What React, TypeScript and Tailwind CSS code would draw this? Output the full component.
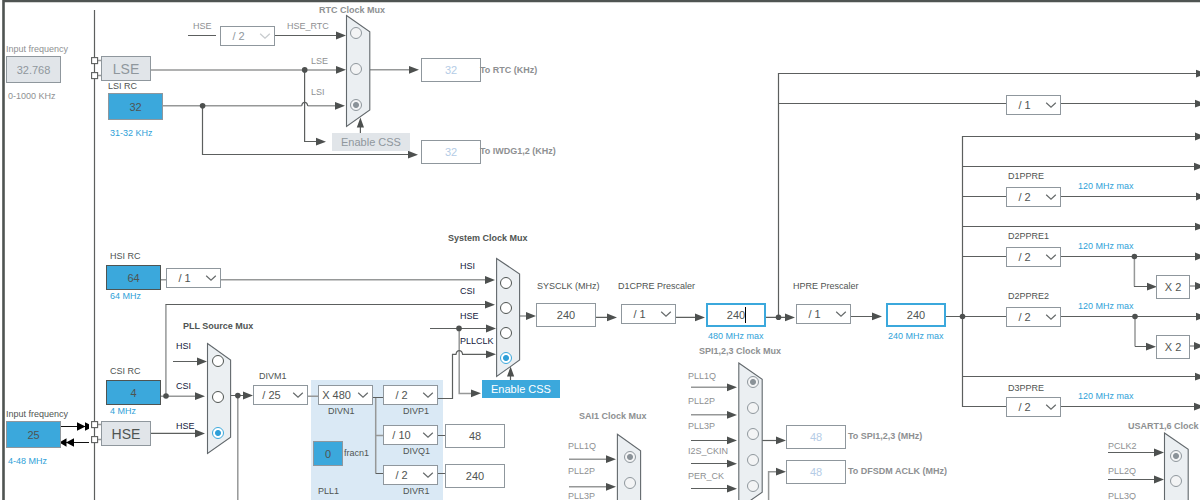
import { useState } from "react";
import clsx from "clsx";

const LINE = "#5c5f5e";
const SOFT_LINE = "#969898";
const ARROW = "#4d504f";

type LabelProps = { at: string; text: string; tone?: string; bold?: boolean; target?: string };

function Label({ at, text, tone = "text-[#4f5452]", bold, target }: LabelProps) {
  const cls = clsx("absolute text-[9px] leading-3 whitespace-nowrap", bold && "font-bold", tone, at);
  return target ? (
    <label htmlFor={target} className={cls}>{text}</label>
  ) : (
    <span className={cls}>{text}</span>
  );
}

const GREY = "text-[#8e9092]";
const BLUE = "text-[#2f9fd8]";
const NAVY = "text-[#13203c]";

const labels: LabelProps[] = [
  { at: "left-[6px] top-[43px]", text: "Input frequency", tone: GREY, target: "lse-freq" },
  { at: "left-[8px] top-[90px]", text: "0-1000 KHz", tone: GREY },
  { at: "left-[108px] top-[80px]", text: "LSI RC", target: "lsi-rc" },
  { at: "left-[110px] top-[127px]", text: "31-32 KHz", tone: BLUE },
  { at: "left-[193px] top-[20px]", text: "HSE", tone: GREY, target: "rtc-div" },
  { at: "left-[287px] top-[20px]", text: "HSE_RTC", tone: GREY, target: "rtc-0" },
  { at: "left-[311px] top-[55px]", text: "LSE", tone: GREY, target: "rtc-1" },
  { at: "left-[311px] top-[86px]", text: "LSI", tone: GREY, target: "rtc-2" },
  { at: "left-[319px] top-[4px]", text: "RTC Clock Mux", tone: GREY, bold: true },
  { at: "left-[480px] top-[64px]", text: "To RTC (KHz)", tone: GREY, bold: true, target: "to-rtc" },
  { at: "left-[480px] top-[145px]", text: "To IWDG1,2 (KHz)", tone: GREY, bold: true, target: "to-iwdg" },
  { at: "left-[110px] top-[250px]", text: "HSI RC", target: "hsi-rc" },
  { at: "left-[110px] top-[290px]", text: "64 MHz", tone: BLUE },
  { at: "left-[183px] top-[320px]", text: "PLL Source Mux", bold: true },
  { at: "left-[176px] top-[340px]", text: "HSI", tone: NAVY, target: "pll-0" },
  { at: "left-[176px] top-[380px]", text: "CSI", tone: NAVY, target: "pll-1" },
  { at: "left-[176px] top-[420px]", text: "HSE", tone: NAVY, target: "pll-2" },
  { at: "left-[110px] top-[365px]", text: "CSI RC", target: "csi-rc" },
  { at: "left-[110px] top-[405px]", text: "4 MHz", tone: BLUE },
  { at: "left-[6px] top-[408px]", text: "Input frequency", target: "hse-freq" },
  { at: "left-[8px] top-[455px]", text: "4-48 MHz", tone: BLUE },
  { at: "left-[259px] top-[370px]", text: "DIVM1", target: "divm1" },
  { at: "left-[328px] top-[405px]", text: "DIVN1", target: "divn1" },
  { at: "left-[403px] top-[405px]", text: "DIVP1", target: "divp1" },
  { at: "left-[403px] top-[445px]", text: "DIVQ1", target: "divq1" },
  { at: "left-[403px] top-[485px]", text: "DIVR1", target: "divr1" },
  { at: "left-[344px] top-[447px]", text: "fracn1", target: "fracn1" },
  { at: "left-[318px] top-[485px]", text: "PLL1" },
  { at: "left-[448px] top-[232px]", text: "System Clock Mux", bold: true },
  { at: "left-[460px] top-[260px]", text: "HSI", tone: NAVY, target: "sys-0" },
  { at: "left-[460px] top-[285px]", text: "CSI", tone: NAVY, target: "sys-1" },
  { at: "left-[460px] top-[310px]", text: "HSE", tone: NAVY, target: "sys-2" },
  { at: "left-[460px] top-[335px]", text: "PLLCLK", tone: NAVY, target: "sys-3" },
  { at: "left-[537px] top-[280px]", text: "SYSCLK (MHz)", target: "sysclk" },
  { at: "left-[618px] top-[280px]", text: "D1CPRE Prescaler", target: "d1cpre" },
  { at: "left-[793px] top-[280px]", text: "HPRE Prescaler", target: "hpre" },
  { at: "left-[708px] top-[330px]", text: "480 MHz max", tone: BLUE, target: "cpu-clk" },
  { at: "left-[888px] top-[330px]", text: "240 MHz max", tone: BLUE, target: "hclk" },
  { at: "left-[699px] top-[345px]", text: "SPI1,2,3 Clock Mux", tone: GREY, bold: true },
  { at: "left-[688px] top-[370px]", text: "PLL1Q", tone: GREY, target: "spi-0" },
  { at: "left-[688px] top-[395px]", text: "PLL2P", tone: GREY, target: "spi-1" },
  { at: "left-[688px] top-[420px]", text: "PLL3P", tone: GREY, target: "spi-2" },
  { at: "left-[688px] top-[445px]", text: "I2S_CKIN", tone: GREY, target: "spi-3" },
  { at: "left-[688px] top-[470px]", text: "PER_CK", tone: GREY, target: "spi-4" },
  { at: "left-[579px] top-[410px]", text: "SAI1 Clock Mux", tone: GREY, bold: true },
  { at: "left-[568px] top-[440px]", text: "PLL1Q", tone: GREY, target: "sai-0" },
  { at: "left-[568px] top-[465px]", text: "PLL2P", tone: GREY, target: "sai-1" },
  { at: "left-[568px] top-[490px]", text: "PLL3P", tone: GREY },
  { at: "left-[848px] top-[430px]", text: "To SPI1,2,3 (MHz)", tone: GREY, bold: true, target: "to-spi" },
  { at: "left-[848px] top-[465px]", text: "To DFSDM ACLK (MHz)", tone: GREY, bold: true, target: "to-dfsdm" },
  { at: "left-[1008px] top-[170px]", text: "D1PPRE", target: "d1ppre" },
  { at: "left-[1008px] top-[230px]", text: "D2PPRE1", target: "d2ppre1" },
  { at: "left-[1008px] top-[290px]", text: "D2PPRE2", target: "d2ppre2" },
  { at: "left-[1008px] top-[382px]", text: "D3PPRE", target: "d3ppre" },
  { at: "left-[1078px] top-[180px]", text: "120 MHz max", tone: BLUE },
  { at: "left-[1078px] top-[240px]", text: "120 MHz max", tone: BLUE },
  { at: "left-[1078px] top-[300px]", text: "120 MHz max", tone: BLUE },
  { at: "left-[1078px] top-[390px]", text: "120 MHz max", tone: BLUE },
  { at: "left-[1128px] top-[420px]", text: "USART1,6 Clock Mux", tone: GREY, bold: true },
  { at: "left-[1108px] top-[440px]", text: "PCLK2", tone: GREY, target: "usart-0" },
  { at: "left-[1108px] top-[465px]", text: "PLL2Q", tone: GREY, target: "usart-1" },
  { at: "left-[1108px] top-[490px]", text: "PLL3Q", tone: GREY },
];

type FieldProps = { id: string; at: string; value: string; look: string; name?: string; readOnly?: boolean };

const OUT = "w-[60px] h-6 border border-[#8f979d] bg-white text-[#4f5452]";
const OUT_OFF = "w-[60px] h-6 border border-[#8f979d] bg-white text-[#b4cce6]";
const OUT_EDIT = "w-[60px] h-6 border-2 border-[#3ba8dc] bg-white text-[#4f5452]";
const OSC = "w-[55px] h-[25px] border border-[#4f5452] bg-[#3ba8dc] text-[#4f5452]";
const SRC = "w-[55px] h-[27px] border border-[#8f979d] bg-[#3ba8dc] text-[#4f5452]";
const SRC_OFF = "w-[55px] h-[27px] border border-[#8f979d] bg-[#e1e5e9] text-[#8f979d]";
const MULT = "w-[34px] h-6 border border-[#8f979d] bg-white text-[#4f5452]";

const fields: FieldProps[] = [
  { id: "lse-freq", at: "left-[6px] top-[56px]", value: "32.768", look: SRC_OFF, readOnly: true },
  { id: "lsi-rc", at: "left-[108px] top-[93px]", value: "32", look: SRC, readOnly: true },
  { id: "hsi-rc", at: "left-[106px] top-[265px]", value: "64", look: OSC, readOnly: true },
  { id: "csi-rc", at: "left-[106px] top-[380px]", value: "4", look: OSC, readOnly: true },
  { id: "hse-freq", at: "left-[6px] top-[421px]", value: "25", look: SRC },
  { id: "to-rtc", at: "left-[421px] top-[58px]", value: "32", look: OUT_OFF, readOnly: true },
  { id: "to-iwdg", at: "left-[421px] top-[140px]", value: "32", look: OUT_OFF, readOnly: true },
  { id: "fracn1", at: "left-[313px] top-[441px]", value: "0", look: "w-[30px] h-[25px] border border-[#8f979d] bg-[#3ba8dc] text-[#4f5452]" },
  { id: "pll1q-out", name: "PLL1Q output", at: "left-[445px] top-[424px]", value: "48", look: OUT, readOnly: true },
  { id: "pll1r-out", name: "PLL1R output", at: "left-[445px] top-[464px]", value: "240", look: OUT, readOnly: true },
  { id: "sysclk", at: "left-[536px] top-[303px]", value: "240", look: OUT, readOnly: true },
  { id: "cpu-clk", at: "left-[706px] top-[303px]", value: "240", look: OUT_EDIT },
  { id: "hclk", at: "left-[886px] top-[303px]", value: "240", look: OUT_EDIT },
  { id: "to-spi", at: "left-[786px] top-[425px]", value: "48", look: OUT_OFF, readOnly: true },
  { id: "to-dfsdm", at: "left-[786px] top-[460px]", value: "48", look: OUT_OFF, readOnly: true },
  { id: "tim-x2-a", name: "D2PPRE1 timer multiplier", at: "left-[1156px] top-[275px]", value: "X 2", look: MULT, readOnly: true },
  { id: "tim-x2-b", name: "D2PPRE2 timer multiplier", at: "left-[1156px] top-[335px]", value: "X 2", look: MULT, readOnly: true },
];

function Field({ id, at, value, look, name, readOnly }: FieldProps) {
  return (
    <input
      id={id}
      aria-label={name}
      defaultValue={value}
      readOnly={readOnly}
      className={clsx("absolute p-0 text-center text-[11px] leading-4 outline-none", look, at)}
    />
  );
}

type DividerProps = { id: string; at: string; value: string; name?: string; off?: boolean };

const dividers: DividerProps[] = [
  { id: "rtc-div", at: "left-[220px] top-[26px]", value: "/ 2", off: true },
  { id: "hsi-div", name: "HSI divider", at: "left-[166px] top-[268px]", value: "/ 1" },
  { id: "divm1", at: "left-[253px] top-[385px]", value: "/ 25" },
  { id: "divn1", at: "left-[318px] top-[385px]", value: "X 480" },
  { id: "divp1", at: "left-[383px] top-[385px]", value: "/ 2" },
  { id: "divq1", at: "left-[383px] top-[425px]", value: "/ 10" },
  { id: "divr1", at: "left-[383px] top-[465px]", value: "/ 2" },
  { id: "d1cpre", at: "left-[621px] top-[304px]", value: "/ 1" },
  { id: "hpre", at: "left-[796px] top-[304px]", value: "/ 1" },
  { id: "systick-div", name: "System timer divider", at: "left-[1006px] top-[95px]", value: "/ 1" },
  { id: "d1ppre", at: "left-[1006px] top-[187px]", value: "/ 2" },
  { id: "d2ppre1", at: "left-[1006px] top-[247px]", value: "/ 2" },
  { id: "d2ppre2", at: "left-[1006px] top-[307px]", value: "/ 2" },
  { id: "d3ppre", at: "left-[1006px] top-[397px]", value: "/ 2" },
];

function Divider({ id, at, value, name, off }: DividerProps) {
  return (
    <div className={clsx("absolute grid h-5 w-[55px] items-center", off ? "text-[#8f979d]" : "text-[#4f5452]", at)}>
      <select
        id={id}
        aria-label={name}
        disabled={off}
        defaultValue={value}
        className="col-start-1 row-start-1 block h-5 w-full appearance-none border border-[#8f979d] bg-white pr-[18px] pl-0 text-center text-[11px] leading-4 text-inherit opacity-100 outline-none"
      >
        <option>{value}</option>
      </select>
      <svg className={clsx("pointer-events-none col-start-1 row-start-1 mr-1 h-2 w-3 justify-self-end", off && "opacity-50")} viewBox="0 0 12 8" fill="none" stroke={off ? "#8f979d" : "#666a6b"} strokeWidth="1.2">
        <path d="M1.2 1.8 6 6.2 10.8 1.8" />
      </svg>
    </div>
  );
}

type Mux = { group: string; off: boolean; initial: number; inputs: string[]; names: string[] };

const muxes: Mux[] = [
  { group: "rtc", off: true, initial: 2, names: ["HSE_RTC", "LSE", "LSI"], inputs: ["left-[350px] top-[27px]", "left-[350px] top-[63px]", "left-[350px] top-[99px]"] },
  { group: "pll", off: false, initial: 2, names: ["HSI", "CSI", "HSE"], inputs: ["left-[212px] top-[355px]", "left-[212px] top-[391px]", "left-[212px] top-[427px]"] },
  { group: "sys", off: false, initial: 3, names: ["HSI", "CSI", "HSE", "PLLCLK"], inputs: ["left-[500px] top-[277px]", "left-[500px] top-[302px]", "left-[500px] top-[327px]", "left-[500px] top-[352px]"] },
  { group: "spi", off: true, initial: 0, names: ["PLL1Q", "PLL2P", "PLL3P", "I2S_CKIN", "PER_CK"], inputs: ["left-[747px] top-[376px]", "left-[747px] top-[402px]", "left-[747px] top-[428px]", "left-[747px] top-[454px]", "left-[747px] top-[480px]"] },
  { group: "sai", off: true, initial: 0, names: ["PLL1Q", "PLL2P"], inputs: ["left-[624px] top-[451px]", "left-[624px] top-[477px]"] },
  { group: "usart", off: true, initial: 0, names: ["PCLK2", "PLL2Q"], inputs: ["left-[1170px] top-[450px]", "left-[1170px] top-[475px]"] },
];

function MuxInputs({ mux }: { mux: Mux }) {
  const [selected, setSelected] = useState(mux.initial);
  return (
    <>
      {mux.inputs.map((at, i) => (
        <input
          key={at}
          id={`${mux.group}-${i}`}
          type="radio"
          name={mux.group}
          aria-label={mux.names[i]}
          checked={selected === i}
          onChange={() => setSelected(i)}
          disabled={mux.off}
          className={clsx(
            "absolute m-0 size-3 appearance-none rounded-full border",
            mux.off
              ? "border-[#8f979d] bg-[#f3f4f5] checked:bg-[radial-gradient(circle,#8a9298_0_2.5px,#f3f4f5_3.5px)]"
              : "border-[#4f5452] bg-white checked:border-[#3ba8dc] checked:bg-[radial-gradient(circle,#2f9fd8_0_2.5px,#ffffff_3.5px)]",
            at,
          )}
        />
      ))}
    </>
  );
}

const muxShapes = [
  "346.5,15.5 369.8,31.8 369.8,110 346.5,126.5",
  "207.5,343.5 230.6,360 230.6,437.2 207.5,453.5",
  "496.6,258.5 519.6,274 519.6,360 496.6,376.5",
  "738.8,363 762.2,379.3 762.2,492.3 738.8,508.5",
  "617.4,434.3 640.6,450.7 640.6,540 617.4,556",
  "1164.5,433 1188.2,449.3 1188.2,540 1164.5,556",
];

const softWires = [
  "M98 60.5H101 M98 75.5H101 M98 424.5H101 M98 439.5H101",
  "M151 69.9H338 M163 105.8H301.7 M307.7 105.8H338",
  "M370 69.7H411",
  "M161 279.7H166 M221 279.8H486",
  "M161 396.3H198 M165.9 396V304.5",
  "M237.8 396V2000",
  "M459.2 329V393.4H473",
  "M308 396.2H318 M375.7 397V473.5 M375.7 435.5H383",
  "M519.6 316H529",
  "M691 387.2H729 M691 414.8H729 M768.6 2000V471.7H777",
  "M569 459.2H608 M569 486.8H608",
  "M1134.4 256V286.6 M1135 316V346.6 M1190 286H1197 M1190 346H1197",
];

const wires = [
  "M94.5 10V2000",
  "M188 35.5H216 M275 35.5H338",
  "M301.7 105.8c.6-4.6 5.4-4.6 6 0",
  "M202.5 105.5V154.5H410",
  "M304.6 70V141.5H317 M360.4 133V126",
  "M165.5 304.5H487",
  "M173 361.5H200 M151 433.4H198 M230.6 395.5H246",
  "M430 328.5H488",
  "M438 398.5H452.5V354.3H456c.8-4.8 5.7-4.8 6.6 0H488",
  "M510.5 380V374",
  "M596 317.4H610 M676 317.4H697 M766 317.4H787",
  "M778.5 317V73.5H1198 M778.5 103.5H1006 M1061 103.5H1198",
  "M851 316.5H875 M946 316.5H1006 M962.5 136V407",
  "M962 136.5H1198 M962 166.5H1198 M962 196.5H1006 M1061 196.5H1198 M962 226.5H1198",
  "M962 256.5H1006 M1061 256.5H1198 M1061 316.5H1198 M962 376.5H1198 M962 406.5H1006 M1061 406.5H1198",
  "M1134 286.5H1148 M1135 346.5H1148",
  "M373 397.5H383 M375.7 473.5H383 M438 435.5H445 M438 473.5H445",
  "M691 440.5H729 M691 463.5H729 M691 488.5H729",
  "M762 440.5H777",
  "M1108 452.5H1156 M1108 479.5H1156",
];

const arrows: [number, number][] = [
  [346, 35.5], [346, 69.8], [345, 105.8], [419, 69.8], [418, 154.7], [326, 141.7],
  [495, 280], [495, 304.7], [496, 328.5], [496, 354.3], [481, 393.3], [536, 316],
  [207, 361.5], [205, 396.2], [205, 433.5], [253, 395.5],
  [617, 317.4], [705, 317.4], [795, 317.4], [882, 316.4],
  [1206, 73.7], [1205, 103.7], [1205, 136.5], [1204, 166.6], [1206, 196.5], [1205, 226.7],
  [1205, 256.5], [1206, 316.7], [1205, 376.7], [1204, 406.6], [1205, 286], [1204, 346],
  [1157, 286.7], [1156, 346.7],
  [737, 387.3], [737, 414.9], [737, 440.4], [737, 463.7], [737, 488.7],
  [786, 440.4], [786, 471.7], [616, 459.2], [616, 486.8], [1164, 452.5], [1164, 479.5],
];

const joints: [number, number][] = [
  [202.6, 105.8], [304.7, 69.9], [166, 396], [237.8, 395.6], [459, 328.4],
  [778.5, 317.2], [962.5, 316.5], [1134.4, 256.5], [1135, 316.5],
];

const pads: [number, number][] = [[94.6, 60.6], [94.6, 75.6], [94.6, 424.6], [94.6, 439.6]];

function Wiring() {
  return (
    <svg className="pointer-events-none absolute inset-0 h-full w-full" aria-hidden="true">
      <path d="M3.5 2000V1H4000" fill="none" stroke="#4f5452" strokeWidth="2.6" />
      <g fill="none" stroke={SOFT_LINE} strokeWidth="1.5">
        {softWires.map((d) => <path key={d} d={d} />)}
      </g>
      <g fill="none" stroke={LINE} strokeWidth="1.2">
        {wires.map((d) => <path key={d} d={d} />)}
      </g>
      <g fill="#ebeff2" stroke="#62686c" strokeWidth="1.1">
        {muxShapes.map((points) => <polygon key={points} points={points} />)}
      </g>
      <g fill={ARROW}>
        {arrows.map(([x, y]) => <path key={`${x} ${y}`} d={`M${x} ${y}l-10-3.9v7.8z`} />)}
        <path d="M360.4 117.5l3.6 10h-7.2z M510.6 366.5l3.6 10h-7.2z" />
        {joints.map(([x, y]) => <circle key={`${x} ${y}`} cx={x} cy={y} r="2.8" />)}
      </g>
      <g fill="#ffffff" stroke={LINE} strokeWidth="1.1">
        {pads.map(([x, y]) => <rect key={y} x={x - 3} y={y - 3} width="6" height="6" />)}
      </g>
      <path d="M61 426.5H78 M74 442.5H89" stroke="#111111" />
      <path d="M85.5 426.5l-8.5-4.2v8.4z M85 422.3l4 2v4.4l-4 2z M66 442.5l8-4.2v8.4z M61 441.5l5.5-3.2v8.4l-5.5-3.2z" fill="#000000" />
    </svg>
  );
}

const OSC_BUTTON = "absolute flex h-[25px] w-[50px] items-center justify-center border border-[#8f979d] bg-[#e1e5e9] text-sm leading-4";
const CSS_BUTTON = "absolute flex h-[18px] w-[78px] items-center justify-center text-[11px] leading-4 whitespace-nowrap";

export default function App() {
  return (
    <main className="relative h-screen w-full overflow-hidden bg-white font-['Liberation_Sans',Arial,sans-serif]">
      <div className="absolute top-[380px] bottom-0 left-[311px] w-[132px] bg-[#dae9f5]" />
      <Wiring />
      <button type="button" className={clsx(OSC_BUTTON, "top-[56px] left-[101px] text-[#8f979d]")}>LSE</button>
      <button type="button" className={clsx(OSC_BUTTON, "top-[421px] left-[101px] text-[#4f5452]")}>HSE</button>
      <button type="button" className={clsx(CSS_BUTTON, "top-[133px] left-[332px] bg-[#e1e5e9] text-[#8f979d]")}>Enable CSS</button>
      <button type="button" className={clsx(CSS_BUTTON, "top-[380px] left-[482px] bg-[#3ba8dc] text-white")}>Enable CSS</button>
      {fields.map((f) => <Field key={f.id} {...f} />)}
      {dividers.map((d) => <Divider key={d.id} {...d} />)}
      {muxes.map((m) => <MuxInputs key={m.group} mux={m} />)}
      {labels.map((l) => <Label key={l.at} {...l} />)}
      <span aria-hidden="true" className="absolute top-[307px] left-[745px] h-4 w-px bg-black" />
    </main>
  );
}
